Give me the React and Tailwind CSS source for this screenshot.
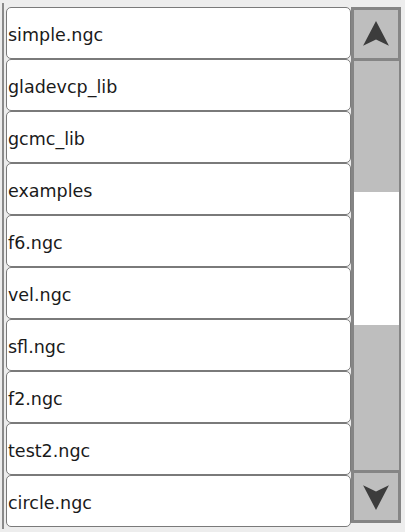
import React from 'react';

const files = [
  'simple.ngc',
  'gladevcp_lib',
  'gcmc_lib',
  'examples',
  'f6.ngc',
  'vel.ngc',
  'sfl.ngc',
  'f2.ngc',
  'test2.ngc',
  'circle.ngc',
];

function Arrow({ down }) {
  return (
    <svg width="28" height="28" viewBox="0 0 26 26" className={down ? 'rotate-180' : ''}>
      <path d="M13 1 L25 24 L13 18 L1 24 Z" fill="#3c3c3c" />
    </svg>
  );
}

export default function App() {
  return (
    <div className="w-[405px] h-[532px] bg-[#ededed] overflow-hidden font-['DejaVu_Sans',sans-serif]">
      <div className="flex pt-[7px] pl-[2px]">
        {/* file list */}
        <div className="w-[349px] border-l-2 border-[#8a8a8a] pl-[2px] -mt-[4px] pt-[4px] pb-[2px]">
          {files.map((f) => (
            <div
              key={f}
              className="h-[52px] bg-white border border-[#7a7a7a] rounded-[5px] flex items-center pl-[1px] pt-[5px] text-[17.5px] text-[#1a1a1a]"
            >
              {f}
            </div>
          ))}
        </div>

        {/* scrollbar */}
        <div className="w-[50px] h-[516px] flex flex-col">
          <div className="h-[54px] bg-[#bebebe] border-[3px] border-[#858585] flex items-center justify-center">
            <Arrow />
          </div>
          <div className="flex-1 flex flex-col border-l-[3px] border-r-2 border-[#858585]">
            <div className="h-[131px] bg-[#bebebe]" />
            <div className="h-[133px] bg-white" />
            <div className="flex-1 bg-[#bebebe]" />
          </div>
          <div className="h-[53px] bg-[#bebebe] border-[3px] border-[#858585] flex items-center justify-center">
            <Arrow down />
          </div>
        </div>
      </div>
    </div>
  );
}
